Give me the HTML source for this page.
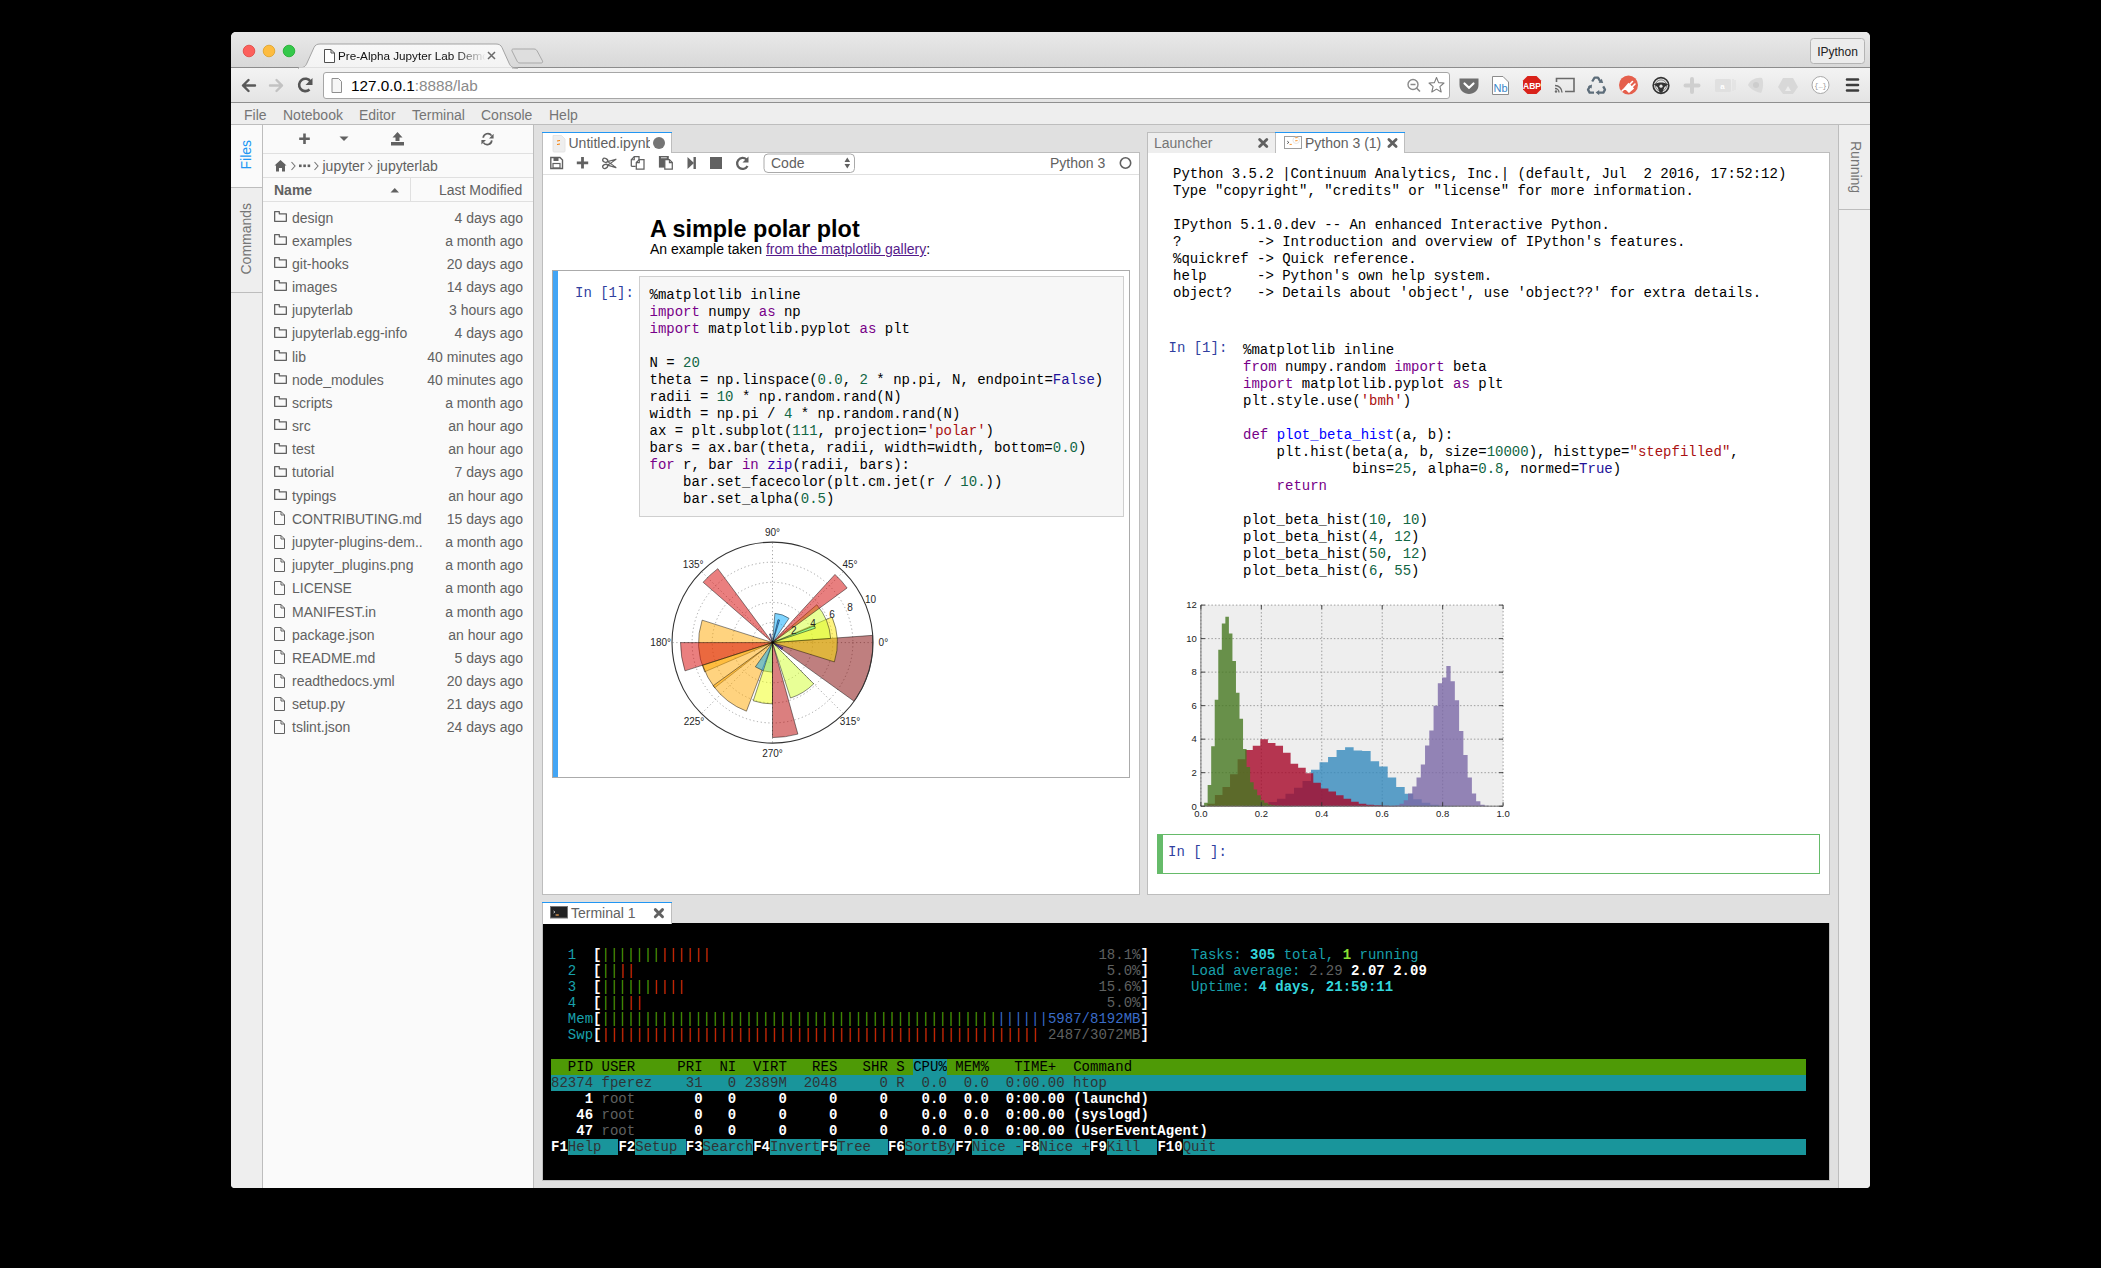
<!DOCTYPE html>
<html><head><meta charset="utf-8">
<style>
*{box-sizing:border-box}
html,body{margin:0;padding:0;background:#000;width:2101px;height:1268px;overflow:hidden}
body{font-family:"Liberation Sans",sans-serif;font-size:14px;color:#000}
.a{position:absolute}
.pre{white-space:pre}
.mono{font-family:"Liberation Mono",monospace}
#win{position:absolute;left:231px;top:32px;width:1639px;height:1156px;border-radius:5px 5px 4px 4px;overflow:hidden;background:#eeeeee}
#win > .a, #win .a{}
/* everything inside uses page coordinates via a shifted container */
#pg{position:absolute;left:-231px;top:-32px;width:2101px;height:1268px}
.ln{position:absolute;height:1px}
.vl{position:absolute;width:1px}
.ui{color:#757575}
.fb-row{position:absolute;left:274px;width:249px;height:23px;color:#616161;font-size:14px;line-height:23px}
.fb-row .d{position:absolute;right:0;top:0}
.fb-row .n{position:absolute;left:18px;top:0}
.fold{position:absolute;left:0;top:4.3px;width:13px;height:11px}
.code{font-family:"Liberation Mono",monospace;font-size:14px;line-height:17px;white-space:pre;color:#000}
.k{color:#770088}.nu{color:#116644}.s{color:#aa1111}.at{color:#221199}.bi{color:#3300aa}.df{color:#0000ff}
.prompt{font-family:"Liberation Mono",monospace;font-size:14px;color:#303f9f;white-space:pre}
.term{font-family:"Liberation Mono",monospace;font-size:14px;line-height:16px;white-space:pre;color:#d3d7cf}
</style></head><body>
<div id="win"><div id="pg">

<!-- ===== Chrome tab strip ===== -->
<div class="a" style="left:231px;top:32px;width:1639px;height:35px;background:linear-gradient(#e9e9e9,#d8d8d8)"></div>
<div class="ln" style="left:231px;top:67px;width:1639px;background:#8c8c8c"></div>
<!-- toolbar -->
<div class="a" style="left:231px;top:68px;width:1639px;height:34px;background:linear-gradient(#f3f3f3,#e4e4e4)"></div>
<div class="ln" style="left:231px;top:102px;width:1639px;background:#8f8f8f"></div>
<!-- menubar -->
<div class="a" style="left:231px;top:103px;width:1639px;height:21px;background:#eeeeee"></div>
<div class="ln" style="left:231px;top:124px;width:1639px;background:#bdbdbd"></div>

<svg class="a" style="left:0;top:0" width="2101" height="130" viewBox="0 0 2101 130">
  <defs>
    <linearGradient id="tabg" x1="0" y1="0" x2="0" y2="1"><stop offset="0" stop-color="#f8f8f8"/><stop offset="1" stop-color="#f3f3f3"/></linearGradient>
  </defs>
  <!-- traffic lights -->
  <circle cx="249" cy="51" r="5.8" fill="#fc605c" stroke="#e0443e" stroke-width="0.8"/>
  <circle cx="269" cy="51" r="5.8" fill="#fdbc40" stroke="#dea123" stroke-width="0.8"/>
  <circle cx="289" cy="51" r="5.8" fill="#34c84a" stroke="#1aab29" stroke-width="0.8"/>
  <!-- active tab -->
  <path d="M298 68 C304 68 305.5 66.5 307 63 L314 47.5 C315.2 45 317 44 320 44 L496 44 C499 44 500.8 45 502 47.5 L509 63 C510.5 66.5 512 68 518 68 Z" fill="url(#tabg)" stroke="#a3a3a3" stroke-width="1"/>
  <rect x="299" y="67.5" width="213" height="2" fill="#f3f3f3"/>
  <!-- new tab button -->
  <path d="M513.5 49 L534 49 C535.5 49 536.5 49.8 537.2 51 L542.5 61 C543 62.3 542.3 63 541 63 L520 63 C518.5 63 517.6 62.3 517 61 L512 51 C511.5 49.8 512 49 513.5 49 Z" fill="#dedede" stroke="#a9a9a9" stroke-width="1"/>
  <!-- tab page icon -->
  <path d="M324.5 49.5 L331 49.5 L334.5 53 L334.5 62.5 L324.5 62.5 Z M331 49.5 L331 53 L334.5 53" fill="#fff" stroke="#505050" stroke-width="1"/>
  <!-- close x -->
  <path d="M488 52 L495 59 M495 52 L488 59" stroke="#6a6a6a" stroke-width="1.5"/>
  <!-- IPython button -->
  <rect x="1810.5" y="38.5" width="54" height="25" rx="3" fill="#ececec" stroke="#b4b4b4"/>
  <!-- back / forward / reload -->
  <path d="M255 85.5 L243 85.5 M248.5 80 L243 85.5 L248.5 91" fill="none" stroke="#595959" stroke-width="2.4" stroke-linecap="round" stroke-linejoin="round"/>
  <path d="M270 85.5 L282 85.5 M276.5 80 L282 85.5 L276.5 91" fill="none" stroke="#c2c2c2" stroke-width="2.4" stroke-linecap="round" stroke-linejoin="round"/>
  <path d="M309.5 89.5 A6.2 6.2 0 1 1 310.5 81.5" fill="none" stroke="#555" stroke-width="2.6"/>
  <path d="M312.5 78 L312.5 85 L305.5 85 Z" fill="#555"/>
  <!-- address bar -->
  <rect x="323.5" y="72.5" width="1126" height="26" rx="2.5" fill="#fff" stroke="#a6a6a6"/>
  <path d="M332 78.5 L338.5 78.5 L341.5 81.5 L341.5 92.5 L332 92.5 Z" fill="#f6f6f6" stroke="#8e8e8e" stroke-width="1"/>
  <!-- zoom icon -->
  <circle cx="1413" cy="84.5" r="5" fill="none" stroke="#8a8a8a" stroke-width="1.4"/>
  <path d="M1410.5 84.5 L1415.5 84.5 M1416.5 88 L1420 91.5" stroke="#8a8a8a" stroke-width="1.6"/>
  <!-- star -->
  <path d="M1436.5 77.5 L1438.6 82.6 L1444 83 L1439.9 86.6 L1441.2 92 L1436.5 89.1 L1431.8 92 L1433.1 86.6 L1429 83 L1434.4 82.6 Z" fill="none" stroke="#7c7c7c" stroke-width="1.1" stroke-linejoin="round"/>
  <!-- pocket -->
  <path d="M1459.5 78.5 L1478.5 78.5 L1478.5 85 C1478.5 90.5 1474 94 1469 94 C1464 94 1459.5 90.5 1459.5 85 Z" fill="#6f6f6f"/>
  <path d="M1464.5 83.5 L1469 87.8 L1473.5 83.5" fill="none" stroke="#fff" stroke-width="2.2" stroke-linecap="round"/>
  <!-- Nb -->
  <path d="M1492.5 76.5 L1503 76.5 L1508.5 82 L1508.5 94.5 L1492.5 94.5 Z" fill="#fff" stroke="#8c8c8c"/>
  <text x="1493.5" y="91.5" font-family="Liberation Sans" font-size="11" fill="#3a86c8">Nb</text>
  <!-- ABP -->
  <path d="M1527.5 76 L1536.5 76 L1541 80.5 L1541 89.5 L1536.5 94 L1527.5 94 L1523 89.5 L1523 80.5 Z" fill="#d9221a"/>
  <text x="1532" y="89" text-anchor="middle" font-family="Liberation Sans" font-weight="bold" font-size="8.5" fill="#fff">ABP</text>
  <!-- cast -->
  <path d="M1556.5 82 L1556.5 78.5 L1574 78.5 L1574 91.5 L1565 91.5" fill="none" stroke="#6a6a6a" stroke-width="1.6"/>
  <path d="M1555 85.5 A7 7 0 0 1 1562 92.5 M1555 88.5 A4 4 0 0 1 1559 92.5" fill="none" stroke="#6a6a6a" stroke-width="1.4"/>
  <circle cx="1556" cy="91.5" r="1.2" fill="#6a6a6a"/>
  <!-- recycle -->
  <g fill="none" stroke="#5d6d7a" stroke-width="2.3" stroke-linejoin="round">
    <path d="M1592.2 81.5 L1594.6 77.6 L1598 77.6 L1600.3 81.3"/>
    <path d="M1603.2 86.4 L1605 89.6 L1603.4 92.6 L1598.8 92.6"/>
    <path d="M1594 92.6 L1589.6 92.6 L1588 89.6 L1590.2 86"/>
  </g>
  <path d="M1598.6 82.8 L1603.2 83 L1601.8 78.8 Z M1599.2 90 L1599.2 95.2 L1595.6 92.6 Z M1591.6 88.6 L1587.8 86.2 L1592 84.4 Z" fill="#5d6d7a"/>
  <!-- red plug -->
  <circle cx="1628.5" cy="85" r="9.5" fill="#e5604d"/>
  <path d="M1622 91 L1625 88 M1625 88 L1628.5 84 L1633 88.5 L1629 92 Z M1630 84 L1632.5 81.5 M1632.5 86.5 L1635 84" fill="#fff" stroke="#fff" stroke-width="1.6" stroke-linecap="round"/>
  <!-- steering wheel -->
  <circle cx="1661" cy="85.5" r="7.8" fill="#e4e4e4" stroke="#333" stroke-width="1.7"/>
  <circle cx="1661" cy="85.5" r="5.6" fill="none" stroke="#777" stroke-width="0.9"/>
  <path d="M1653.8 84.6 C1656 83 1659 82.6 1661 82.6 C1663 82.6 1666 83 1668.2 84.6 L1664.5 87 L1662.2 92.8 L1659.8 92.8 L1657.5 87 Z" fill="#333"/>
  <circle cx="1661" cy="86.2" r="1.6" fill="#e4e4e4"/>
  <!-- faded icons -->
  <path d="M1692 79 L1692 92 M1685.5 85.5 L1698.5 85.5" stroke="#cfcfcf" stroke-width="4" stroke-linecap="round"/>
  <rect x="1715" y="79" width="16" height="13" rx="1.5" fill="#e0e0e0"/>
  <path d="M1733 79 L1733 91 M1735 80 L1735 90" stroke="#e2e2e2" stroke-width="1.5"/>
  <text x="1722.5" y="89" text-anchor="middle" font-family="Liberation Sans" font-size="8" font-weight="bold" fill="#fff">a</text>
  <path d="M1748 85 C1750 80 1756 77 1762 78 C1764 82 1763 90 1761 93 C1756 92 1750 89 1748 85 Z" fill="#dadada"/>
  <circle cx="1756" cy="85" r="3" fill="#cdcdcd"/>
  <path d="M1783 78 L1793 78 L1798 87 L1793 94 L1783 94 L1778 87 Z" fill="#d8d8d8"/>
  <path d="M1788 86 L1791 91 L1785 91 Z" fill="#ececec"/>
  <circle cx="1820.5" cy="85" r="8.5" fill="#fff" stroke="#a8a8a8" stroke-width="1"/>
  <text x="1820.5" y="88" text-anchor="middle" font-family="Liberation Mono" font-size="7" fill="#999">{…}</text>
  <!-- hamburger -->
  <path d="M1847 79.5 L1858 79.5 M1847 85 L1858 85 M1847 90.5 L1858 90.5" stroke="#3c3c3c" stroke-width="2.6" stroke-linecap="round"/>
</svg>
<div class="a pre" style="left:338px;top:48px;height:16px;line-height:16px;font-size:11.7px;color:#111;width:148px;overflow:hidden;-webkit-mask-image:linear-gradient(90deg,#000 80%,transparent 100%)">Pre-Alpha Jupyter Lab Demo</div>
<div class="a pre" style="left:1810px;top:44px;width:55px;text-align:center;line-height:16px;font-size:12px;color:#222">IPython</div>
<div class="a pre" style="left:351px;top:77px;line-height:17px;font-size:15.3px;color:#000">127.0.0.1<span style="color:#8a8a8a">:8888/lab</span></div>
<!-- JupyterLab menu -->
<div class="a pre ui" style="left:244px;top:106px;line-height:18px;font-size:14px;color:#757575">File</div>
<div class="a pre ui" style="left:283px;top:106px;line-height:18px;font-size:14px;color:#757575">Notebook</div>
<div class="a pre ui" style="left:359px;top:106px;line-height:18px;font-size:14px;color:#757575">Editor</div>
<div class="a pre ui" style="left:412px;top:106px;line-height:18px;font-size:14px;color:#757575">Terminal</div>
<div class="a pre ui" style="left:481px;top:106px;line-height:18px;font-size:14px;color:#757575">Console</div>
<div class="a pre ui" style="left:549px;top:106px;line-height:18px;font-size:14px;color:#757575">Help</div>

<!-- ===== left sidebar ===== -->
<div class="a" style="left:231px;top:125px;width:31px;height:1063px;background:#eeeeee"></div>
<div class="a" style="left:231px;top:125px;width:31px;height:62px;background:#fafafa"></div>
<div class="ln" style="left:231px;top:187px;width:31px;background:#bdbdbd"></div>
<div class="ln" style="left:231px;top:292px;width:31px;background:#bdbdbd"></div>
<div class="vl" style="left:262px;top:125px;height:1063px;background:#bdbdbd"></div>
<div class="a pre" style="left:231.3px;top:145px;width:29px;height:20px;line-height:20px;text-align:center;color:#2196f3;transform:rotate(-90deg);transform-origin:50% 50%">Files</div>
<div class="a pre" style="left:210.3px;top:229px;width:71px;height:20px;line-height:20px;text-align:center;color:#757575;transform:rotate(-90deg);transform-origin:50% 50%">Commands</div>
<!-- ===== right sidebar ===== -->
<div class="a" style="left:1839px;top:125px;width:31px;height:1063px;background:#eeeeee"></div>
<div class="vl" style="left:1838px;top:125px;height:1063px;background:#bdbdbd"></div>
<div class="ln" style="left:1839px;top:209px;width:31px;background:#bdbdbd"></div>
<div class="a pre" style="left:1829.6px;top:156.5px;width:52px;height:20px;line-height:20px;text-align:center;color:#757575;transform:rotate(90deg);transform-origin:50% 50%">Running</div>
<!-- ===== file browser ===== -->
<div class="a" style="left:263px;top:125px;width:270px;height:1063px;background:#fafafa"></div>
<div class="vl" style="left:533px;top:125px;height:1063px;background:#bdbdbd"></div>
<div class="ln" style="left:263px;top:153px;width:270px;background:#e0e0e0"></div>
<div class="ln" style="left:263px;top:177px;width:270px;background:#e0e0e0"></div>
<div class="ln" style="left:263px;top:201px;width:270px;background:#e0e0e0"></div>
<div class="vl" style="left:410px;top:178px;height:23px;background:#e0e0e0"></div>
<svg class="a" style="left:263px;top:125px" width="270" height="80" viewBox="263 125 270 80">
  <path d="M304.5 133.5 L304.5 144 M299.2 138.8 L309.8 138.8" stroke="#616161" stroke-width="2.6"/>
  <path d="M339.5 136.5 L348.5 136.5 L344 141 Z" fill="#616161"/>
  <path d="M397.5 132 L392.5 137.5 L395.5 137.5 L395.5 141 L399.5 141 L399.5 137.5 L402.5 137.5 Z" fill="#616161"/>
  <rect x="391" y="142" width="13" height="3.5" fill="#616161"/>
  <path d="M491.6 135.6 A4.6 4.6 0 0 0 483.2 137.8 M483.4 142.6 A4.6 4.6 0 0 0 491.8 140.4" fill="none" stroke="#616161" stroke-width="1.7"/>
  <path d="M493.6 133.8 L493.6 138.4 L489 138.4 Z M481.4 144.6 L481.4 140 L486 140 Z" fill="#616161"/>
  <!-- breadcrumbs -->
  <path d="M280.5 160 L274.5 165.5 L276 165.5 L276 171.5 L279 171.5 L279 168 L282 168 L282 171.5 L285 171.5 L285 165.5 L286.5 165.5 Z" fill="#616161"/>
  <path d="M291.5 162 L295 166 L291.5 170" fill="none" stroke="#757575" stroke-width="1.1"/>
  <rect x="299" y="164.5" width="2.6" height="2.6" fill="#616161"/><rect x="303.3" y="164.5" width="2.6" height="2.6" fill="#616161"/><rect x="307.6" y="164.5" width="2.6" height="2.6" fill="#616161"/>
  <path d="M314.5 162 L318 166 L314.5 170" fill="none" stroke="#757575" stroke-width="1.1"/>
  <path d="M368.5 162 L372 166 L368.5 170" fill="none" stroke="#757575" stroke-width="1.1"/>
  <path d="M390.5 192.5 L399 192.5 L394.75 188 Z" fill="#616161"/>
</svg>
<div class="a pre" style="left:322.5px;top:156px;line-height:20px;color:#616161">jupyter</div>
<div class="a pre" style="left:377px;top:156px;line-height:20px;color:#616161">jupyterlab</div>
<div class="a pre" style="left:274px;top:180px;line-height:20px;color:#616161;font-weight:bold">Name</div>
<div class="a pre" style="left:439px;top:180px;width:83px;text-align:right;line-height:20px;color:#616161">Last Modified</div>
<div class="fb-row" style="top:206.50px"><svg class="fold" viewBox="0 0 13 11"><path d="M0.65 0.65 L5.3 0.65 L5.3 2.8 L12.35 2.8 L12.35 10.35 L0.65 10.35 Z" fill="none" stroke="#616161" stroke-width="1.3" stroke-linejoin="round"/></svg><span class="n pre">design</span><span class="d pre">4 days ago</span></div>
<div class="fb-row" style="top:229.68px"><svg class="fold" viewBox="0 0 13 11"><path d="M0.65 0.65 L5.3 0.65 L5.3 2.8 L12.35 2.8 L12.35 10.35 L0.65 10.35 Z" fill="none" stroke="#616161" stroke-width="1.3" stroke-linejoin="round"/></svg><span class="n pre">examples</span><span class="d pre">a month ago</span></div>
<div class="fb-row" style="top:252.86px"><svg class="fold" viewBox="0 0 13 11"><path d="M0.65 0.65 L5.3 0.65 L5.3 2.8 L12.35 2.8 L12.35 10.35 L0.65 10.35 Z" fill="none" stroke="#616161" stroke-width="1.3" stroke-linejoin="round"/></svg><span class="n pre">git-hooks</span><span class="d pre">20 days ago</span></div>
<div class="fb-row" style="top:276.04px"><svg class="fold" viewBox="0 0 13 11"><path d="M0.65 0.65 L5.3 0.65 L5.3 2.8 L12.35 2.8 L12.35 10.35 L0.65 10.35 Z" fill="none" stroke="#616161" stroke-width="1.3" stroke-linejoin="round"/></svg><span class="n pre">images</span><span class="d pre">14 days ago</span></div>
<div class="fb-row" style="top:299.22px"><svg class="fold" viewBox="0 0 13 11"><path d="M0.65 0.65 L5.3 0.65 L5.3 2.8 L12.35 2.8 L12.35 10.35 L0.65 10.35 Z" fill="none" stroke="#616161" stroke-width="1.3" stroke-linejoin="round"/></svg><span class="n pre">jupyterlab</span><span class="d pre">3 hours ago</span></div>
<div class="fb-row" style="top:322.40px"><svg class="fold" viewBox="0 0 13 11"><path d="M0.65 0.65 L5.3 0.65 L5.3 2.8 L12.35 2.8 L12.35 10.35 L0.65 10.35 Z" fill="none" stroke="#616161" stroke-width="1.3" stroke-linejoin="round"/></svg><span class="n pre">jupyterlab.egg-info</span><span class="d pre">4 days ago</span></div>
<div class="fb-row" style="top:345.58px"><svg class="fold" viewBox="0 0 13 11"><path d="M0.65 0.65 L5.3 0.65 L5.3 2.8 L12.35 2.8 L12.35 10.35 L0.65 10.35 Z" fill="none" stroke="#616161" stroke-width="1.3" stroke-linejoin="round"/></svg><span class="n pre">lib</span><span class="d pre">40 minutes ago</span></div>
<div class="fb-row" style="top:368.76px"><svg class="fold" viewBox="0 0 13 11"><path d="M0.65 0.65 L5.3 0.65 L5.3 2.8 L12.35 2.8 L12.35 10.35 L0.65 10.35 Z" fill="none" stroke="#616161" stroke-width="1.3" stroke-linejoin="round"/></svg><span class="n pre">node_modules</span><span class="d pre">40 minutes ago</span></div>
<div class="fb-row" style="top:391.94px"><svg class="fold" viewBox="0 0 13 11"><path d="M0.65 0.65 L5.3 0.65 L5.3 2.8 L12.35 2.8 L12.35 10.35 L0.65 10.35 Z" fill="none" stroke="#616161" stroke-width="1.3" stroke-linejoin="round"/></svg><span class="n pre">scripts</span><span class="d pre">a month ago</span></div>
<div class="fb-row" style="top:415.12px"><svg class="fold" viewBox="0 0 13 11"><path d="M0.65 0.65 L5.3 0.65 L5.3 2.8 L12.35 2.8 L12.35 10.35 L0.65 10.35 Z" fill="none" stroke="#616161" stroke-width="1.3" stroke-linejoin="round"/></svg><span class="n pre">src</span><span class="d pre">an hour ago</span></div>
<div class="fb-row" style="top:438.30px"><svg class="fold" viewBox="0 0 13 11"><path d="M0.65 0.65 L5.3 0.65 L5.3 2.8 L12.35 2.8 L12.35 10.35 L0.65 10.35 Z" fill="none" stroke="#616161" stroke-width="1.3" stroke-linejoin="round"/></svg><span class="n pre">test</span><span class="d pre">an hour ago</span></div>
<div class="fb-row" style="top:461.48px"><svg class="fold" viewBox="0 0 13 11"><path d="M0.65 0.65 L5.3 0.65 L5.3 2.8 L12.35 2.8 L12.35 10.35 L0.65 10.35 Z" fill="none" stroke="#616161" stroke-width="1.3" stroke-linejoin="round"/></svg><span class="n pre">tutorial</span><span class="d pre">7 days ago</span></div>
<div class="fb-row" style="top:484.66px"><svg class="fold" viewBox="0 0 13 11"><path d="M0.65 0.65 L5.3 0.65 L5.3 2.8 L12.35 2.8 L12.35 10.35 L0.65 10.35 Z" fill="none" stroke="#616161" stroke-width="1.3" stroke-linejoin="round"/></svg><span class="n pre">typings</span><span class="d pre">an hour ago</span></div>
<div class="fb-row" style="top:507.84px"><svg class="fold" style="top:3.5px;width:11px;height:14px;left:0.3px" viewBox="0 0 11 14"><path d="M0.5 0.5 L7 0.5 L10.5 4 L10.5 13.5 L0.5 13.5 Z M7 0.5 L7 4 L10.5 4" fill="none" stroke="#616161" stroke-width="1"/></svg><span class="n pre">CONTRIBUTING.md</span><span class="d pre">15 days ago</span></div>
<div class="fb-row" style="top:531.02px"><svg class="fold" style="top:3.5px;width:11px;height:14px;left:0.3px" viewBox="0 0 11 14"><path d="M0.5 0.5 L7 0.5 L10.5 4 L10.5 13.5 L0.5 13.5 Z M7 0.5 L7 4 L10.5 4" fill="none" stroke="#616161" stroke-width="1"/></svg><span class="n pre">jupyter-plugins-dem..</span><span class="d pre">a month ago</span></div>
<div class="fb-row" style="top:554.20px"><svg class="fold" style="top:3.5px;width:11px;height:14px;left:0.3px" viewBox="0 0 11 14"><path d="M0.5 0.5 L7 0.5 L10.5 4 L10.5 13.5 L0.5 13.5 Z M7 0.5 L7 4 L10.5 4" fill="none" stroke="#616161" stroke-width="1"/></svg><span class="n pre">jupyter_plugins.png</span><span class="d pre">a month ago</span></div>
<div class="fb-row" style="top:577.38px"><svg class="fold" style="top:3.5px;width:11px;height:14px;left:0.3px" viewBox="0 0 11 14"><path d="M0.5 0.5 L7 0.5 L10.5 4 L10.5 13.5 L0.5 13.5 Z M7 0.5 L7 4 L10.5 4" fill="none" stroke="#616161" stroke-width="1"/></svg><span class="n pre">LICENSE</span><span class="d pre">a month ago</span></div>
<div class="fb-row" style="top:600.56px"><svg class="fold" style="top:3.5px;width:11px;height:14px;left:0.3px" viewBox="0 0 11 14"><path d="M0.5 0.5 L7 0.5 L10.5 4 L10.5 13.5 L0.5 13.5 Z M7 0.5 L7 4 L10.5 4" fill="none" stroke="#616161" stroke-width="1"/></svg><span class="n pre">MANIFEST.in</span><span class="d pre">a month ago</span></div>
<div class="fb-row" style="top:623.74px"><svg class="fold" style="top:3.5px;width:11px;height:14px;left:0.3px" viewBox="0 0 11 14"><path d="M0.5 0.5 L7 0.5 L10.5 4 L10.5 13.5 L0.5 13.5 Z M7 0.5 L7 4 L10.5 4" fill="none" stroke="#616161" stroke-width="1"/></svg><span class="n pre">package.json</span><span class="d pre">an hour ago</span></div>
<div class="fb-row" style="top:646.92px"><svg class="fold" style="top:3.5px;width:11px;height:14px;left:0.3px" viewBox="0 0 11 14"><path d="M0.5 0.5 L7 0.5 L10.5 4 L10.5 13.5 L0.5 13.5 Z M7 0.5 L7 4 L10.5 4" fill="none" stroke="#616161" stroke-width="1"/></svg><span class="n pre">README.md</span><span class="d pre">5 days ago</span></div>
<div class="fb-row" style="top:670.10px"><svg class="fold" style="top:3.5px;width:11px;height:14px;left:0.3px" viewBox="0 0 11 14"><path d="M0.5 0.5 L7 0.5 L10.5 4 L10.5 13.5 L0.5 13.5 Z M7 0.5 L7 4 L10.5 4" fill="none" stroke="#616161" stroke-width="1"/></svg><span class="n pre">readthedocs.yml</span><span class="d pre">20 days ago</span></div>
<div class="fb-row" style="top:693.28px"><svg class="fold" style="top:3.5px;width:11px;height:14px;left:0.3px" viewBox="0 0 11 14"><path d="M0.5 0.5 L7 0.5 L10.5 4 L10.5 13.5 L0.5 13.5 Z M7 0.5 L7 4 L10.5 4" fill="none" stroke="#616161" stroke-width="1"/></svg><span class="n pre">setup.py</span><span class="d pre">21 days ago</span></div>
<div class="fb-row" style="top:716.46px"><svg class="fold" style="top:3.5px;width:11px;height:14px;left:0.3px" viewBox="0 0 11 14"><path d="M0.5 0.5 L7 0.5 L10.5 4 L10.5 13.5 L0.5 13.5 Z M7 0.5 L7 4 L10.5 4" fill="none" stroke="#616161" stroke-width="1"/></svg><span class="n pre">tslint.json</span><span class="d pre">24 days ago</span></div>

<!-- ===== dock area ===== -->
<div class="a" style="left:534px;top:125px;width:1304px;height:1063px;background:#e0e0e0"></div>
<!-- notebook panel -->
<div class="a" style="left:542px;top:152px;width:598px;height:743px;background:#fff;border:1px solid #bdbdbd"></div>
<div class="ln" style="left:543px;top:174px;width:596px;background:#e0e0e0"></div>
<!-- notebook tab -->
<div class="a" style="left:542px;top:132px;width:130px;height:21px;background:#fff;border-left:1px solid #bdbdbd;border-right:1px solid #bdbdbd"></div>
<div class="ln" style="left:542px;top:132px;width:130px;height:1px;background:#2196f3"></div>
<svg class="a" style="left:540px;top:130px" width="600" height="50" viewBox="540 130 600 50">
  <path d="M553 135.5 L561.5 135.5 L565 139 L565 151 Q565 152 564 152 L554 152 Q553 152 553 151 Z" fill="#eeeeee" stroke="#e0e0e0" stroke-width="0.8"/>
  <path d="M557 141 L560 140.5 M557 144.5 L560 144" stroke="#f57c00" stroke-width="1"/>
  <circle cx="659" cy="143" r="6" fill="#757575"/>
  <!-- toolbar icons -->
  <path d="M550.8 157.5 L560 157.5 L562.5 160 L562.5 168.5 L550.8 168.5 Z" fill="none" stroke="#616161" stroke-width="1.4"/>
  <rect x="553.5" y="157.5" width="5" height="3.5" fill="#616161"/>
  <rect x="553" y="163.5" width="7" height="4.5" fill="none" stroke="#616161" stroke-width="1.2"/>
  <path d="M582.5 157 L582.5 168.5 M576.8 162.8 L588.2 162.8" stroke="#616161" stroke-width="2.8"/>
  <ellipse cx="605.2" cy="160.3" rx="2.6" ry="1.9" transform="rotate(25 605.2 160.3)" fill="none" stroke="#616161" stroke-width="1.3"/>
  <ellipse cx="605.2" cy="166.4" rx="2.6" ry="1.9" transform="rotate(-25 605.2 166.4)" fill="none" stroke="#616161" stroke-width="1.3"/>
  <path d="M607.5 161.6 L610.5 163.4 L616 159.2 Z M607.5 165.1 L610.5 163.4 L616 167.6 Z" fill="none" stroke="#616161" stroke-width="1.1" stroke-linejoin="round"/>
  <path d="M631.3 166.3 L631.3 159.8 L634.3 156.6 L639 156.6 L639 160" fill="#fff" stroke="#616161" stroke-width="1.25"/>
  <path d="M631.3 159.8 L634.3 159.8 L634.3 156.6" fill="none" stroke="#616161" stroke-width="1.1"/>
  <path d="M631.3 166.3 L635.7 166.3" stroke="#616161" stroke-width="1.25"/>
  <path d="M636.3 169 L636.3 162.6 L639.3 159.6 L644 159.6 L644 169 Z" fill="#fff" stroke="#616161" stroke-width="1.25"/>
  <path d="M636.3 162.6 L639.3 162.6 L639.3 159.6" fill="none" stroke="#616161" stroke-width="1.1"/>
  <rect x="658.9" y="156" width="9.9" height="11.6" fill="#616161"/>
  <rect x="661" y="157.2" width="5.8" height="1.1" fill="#cfcfcf"/>
  <path d="M664.8 159.6 L669.4 159.6 L672.3 162.6 L672.3 169 L664.8 169 Z" fill="#fff" stroke="#616161" stroke-width="1.25"/>
  <path d="M669.4 159.6 L669.4 162.6 L672.3 162.6" fill="none" stroke="#616161" stroke-width="1.1"/>
  <path d="M687.5 157 L694 163 L687.5 169 Z" fill="#616161"/>
  <rect x="693.5" y="157" width="2.4" height="12" fill="#616161"/>
  <rect x="710" y="157" width="12" height="12" fill="#616161"/>
  <path d="M746.5 159.5 A5.5 5.5 0 1 0 747.5 166" fill="none" stroke="#616161" stroke-width="2.3"/>
  <path d="M748.5 156.5 L748.5 162.5 L742.5 162.5 Z" fill="#616161"/>
  <rect x="764" y="154" width="90.5" height="18.5" rx="4" fill="#fff" stroke="#a0a0a0" stroke-width="0.9"/>
  <path d="M844.5 162 L847.3 157.5 L850.1 162 Z M844.5 164 L847.3 168.5 L850.1 164 Z" fill="#616161"/>
  <circle cx="1125.5" cy="163" r="5.2" fill="none" stroke="#616161" stroke-width="1.6"/>
</svg>
<div class="a pre" style="left:568.5px;top:133px;width:81px;overflow:hidden;line-height:20px;color:#616161">Untitled.ipynb</div>
<div class="a pre" style="left:771px;top:153px;line-height:20px;color:#616161">Code</div>
<div class="a pre" style="left:1050px;top:153px;line-height:20px;color:#616161">Python 3</div>
<!-- markdown cell -->
<div class="a pre" style="left:650px;top:216px;line-height:26px;font-size:23.4px;font-weight:bold;color:#000">A simple polar plot</div>
<div class="a pre" style="left:650px;top:240px;line-height:18px;font-size:14px;color:#000">An example taken <span style="color:#551a8b;text-decoration:underline">from the matplotlib gallery</span>:</div>
<!-- code cell -->
<div class="a" style="left:552px;top:270px;width:578px;height:508px;border:1px solid #ababab;background:#fff"></div>
<div class="a" style="left:553px;top:271px;width:5px;height:506px;background:#42a5f5"></div>
<div class="a prompt" style="left:575px;top:285px;line-height:17px">In [1]:</div>
<div class="a" style="left:639px;top:276px;width:485px;height:241px;border:1px solid #cfcfcf;background:#f7f7f7"></div>
<div class="a code" style="left:649.5px;top:287px">%matplotlib inline
<span class="k">import</span> numpy <span class="k">as</span> np
<span class="k">import</span> matplotlib.pyplot <span class="k">as</span> plt

N = <span class="nu">20</span>
theta = np.linspace(<span class="nu">0.0</span>, <span class="nu">2</span> * np.pi, N, endpoint=<span class="at">False</span>)
radii = <span class="nu">10</span> * np.random.rand(N)
width = np.pi / <span class="nu">4</span> * np.random.rand(N)
ax = plt.subplot(<span class="nu">111</span>, projection=<span class="s">'polar'</span>)
bars = ax.bar(theta, radii, width=width, bottom=<span class="nu">0.0</span>)
<span class="k">for</span> r, bar <span class="k">in</span> <span class="bi">zip</span>(radii, bars):
    bar.set_facecolor(plt.cm.jet(r / <span class="nu">10.</span>))
    bar.set_alpha(<span class="nu">0.5</span>)</div>
<!-- POLAR -->
<svg class="a" style="left:640px;top:520px" width="260" height="250" viewBox="640 520 260 250">
<circle cx="772.5" cy="642.6" r="20.10" fill="none" stroke="#9a9a9a" stroke-width="0.9" stroke-dasharray="1.2 2.6"/>
<circle cx="772.5" cy="642.6" r="40.20" fill="none" stroke="#9a9a9a" stroke-width="0.9" stroke-dasharray="1.2 2.6"/>
<circle cx="772.5" cy="642.6" r="60.30" fill="none" stroke="#9a9a9a" stroke-width="0.9" stroke-dasharray="1.2 2.6"/>
<circle cx="772.5" cy="642.6" r="80.40" fill="none" stroke="#9a9a9a" stroke-width="0.9" stroke-dasharray="1.2 2.6"/>
<line x1="772.5" y1="642.6" x2="873.00" y2="642.60" stroke="#9a9a9a" stroke-width="0.9" stroke-dasharray="1.2 2.6"/>
<line x1="772.5" y1="642.6" x2="843.56" y2="571.54" stroke="#9a9a9a" stroke-width="0.9" stroke-dasharray="1.2 2.6"/>
<line x1="772.5" y1="642.6" x2="772.50" y2="542.10" stroke="#9a9a9a" stroke-width="0.9" stroke-dasharray="1.2 2.6"/>
<line x1="772.5" y1="642.6" x2="701.44" y2="571.54" stroke="#9a9a9a" stroke-width="0.9" stroke-dasharray="1.2 2.6"/>
<line x1="772.5" y1="642.6" x2="672.00" y2="642.60" stroke="#9a9a9a" stroke-width="0.9" stroke-dasharray="1.2 2.6"/>
<line x1="772.5" y1="642.6" x2="701.44" y2="713.66" stroke="#9a9a9a" stroke-width="0.9" stroke-dasharray="1.2 2.6"/>
<line x1="772.5" y1="642.6" x2="772.50" y2="743.10" stroke="#9a9a9a" stroke-width="0.9" stroke-dasharray="1.2 2.6"/>
<line x1="772.5" y1="642.6" x2="843.56" y2="713.66" stroke="#9a9a9a" stroke-width="0.9" stroke-dasharray="1.2 2.6"/>
<path d="M772.5 642.6 L854.11 701.25 A100.50 100.50 0 0 0 872.74 635.33 Z" fill="#7f0000" fill-opacity="0.5" stroke="#000" stroke-opacity="0.5" stroke-width="0.9"/>
<path d="M772.5 642.6 L834.39 661.88 A64.82 64.82 0 0 0 832.04 616.96 Z" fill="#ffea00" fill-opacity="0.5" stroke="#000" stroke-opacity="0.5" stroke-width="0.9"/>
<path d="M772.5 642.6 L830.64 638.38 A58.29 58.29 0 0 0 816.82 604.74 Z" fill="#d1ff2d" fill-opacity="0.5" stroke="#000" stroke-opacity="0.5" stroke-width="0.9"/>
<path d="M772.5 642.6 L815.36 628.18 A45.23 45.23 0 0 0 814.43 625.66 Z" fill="#4cffb2" fill-opacity="0.5" stroke="#000" stroke-opacity="0.5" stroke-width="0.9"/>
<path d="M772.5 642.6 L847.11 587.99 A92.46 92.46 0 0 0 834.97 574.43 Z" fill="#d10000" fill-opacity="0.5" stroke="#000" stroke-opacity="0.5" stroke-width="0.9"/>
<path d="M772.5 642.6 L789.04 618.36 A29.35 29.35 0 0 0 774.90 613.35 Z" fill="#00aaff" fill-opacity="0.5" stroke="#000" stroke-opacity="0.5" stroke-width="0.9"/>
<path d="M772.5 642.6 L779.60 620.08 A23.62 23.62 0 0 0 778.01 619.64 Z" fill="#0070ff" fill-opacity="0.5" stroke="#000" stroke-opacity="0.5" stroke-width="0.9"/>
<path d="M772.5 642.6 L770.62 633.75 A9.05 9.05 0 0 0 769.41 634.10 Z" fill="#0000db" fill-opacity="0.5" stroke="#000" stroke-opacity="0.5" stroke-width="0.9"/>
<path d="M772.5 642.6 L717.80 568.68 A91.96 91.96 0 0 0 703.10 582.27 Z" fill="#d60000" fill-opacity="0.5" stroke="#000" stroke-opacity="0.5" stroke-width="0.9"/>
<path d="M772.5 642.6 L702.13 620.14 A73.87 73.87 0 0 0 704.66 671.82 Z" fill="#ffa800" fill-opacity="0.5" stroke="#000" stroke-opacity="0.5" stroke-width="0.9"/>
<path d="M772.5 642.6 L680.54 642.60 A91.96 91.96 0 0 0 684.99 670.86 Z" fill="#d60000" fill-opacity="0.5" stroke="#000" stroke-opacity="0.5" stroke-width="0.9"/>
<path d="M772.5 642.6 L702.73 665.27 A73.37 73.37 0 0 0 714.69 687.77 Z" fill="#ffa800" fill-opacity="0.5" stroke="#000" stroke-opacity="0.5" stroke-width="0.9"/>
<path d="M772.5 642.6 L713.15 685.72 A73.37 73.37 0 0 0 746.45 711.18 Z" fill="#ffa800" fill-opacity="0.5" stroke="#000" stroke-opacity="0.5" stroke-width="0.9"/>
<path d="M772.5 642.6 L755.37 666.80 A29.65 29.65 0 0 0 772.50 672.25 Z" fill="#00adff" fill-opacity="0.5" stroke="#000" stroke-opacity="0.5" stroke-width="0.9"/>
<path d="M772.5 642.6 L753.25 700.80 A61.30 61.30 0 0 0 772.50 703.90 Z" fill="#efff0f" fill-opacity="0.5" stroke="#000" stroke-opacity="0.5" stroke-width="0.9"/>
<path d="M772.5 642.6 L772.50 737.57 A94.97 94.97 0 0 0 797.88 734.12 Z" fill="#b70000" fill-opacity="0.5" stroke="#000" stroke-opacity="0.5" stroke-width="0.9"/>
<path d="M772.5 642.6 L790.51 698.04 A58.29 58.29 0 0 0 813.72 683.82 Z" fill="#d1ff2d" fill-opacity="0.5" stroke="#000" stroke-opacity="0.5" stroke-width="0.9"/>
<path d="M772.5 642.6 L781.73 649.56 A11.56 11.56 0 0 0 782.89 647.67 Z" fill="#0000f4" fill-opacity="0.5" stroke="#000" stroke-opacity="0.5" stroke-width="0.9"/>
<circle cx="772.5" cy="642.6" r="100.5" fill="none" stroke="#333" stroke-width="1.1"/>
<text x="772.5" y="535.8000000000001" text-anchor="middle" font-family="Liberation Sans" font-size="10" fill="#262626">90°</text>
<text x="850" y="568.0" text-anchor="middle" font-family="Liberation Sans" font-size="10" fill="#262626">45°</text>
<text x="883.4" y="646.2" text-anchor="middle" font-family="Liberation Sans" font-size="10" fill="#262626">0°</text>
<text x="850" y="724.6" text-anchor="middle" font-family="Liberation Sans" font-size="10" fill="#262626">315°</text>
<text x="772.5" y="757.2" text-anchor="middle" font-family="Liberation Sans" font-size="10" fill="#262626">270°</text>
<text x="694" y="724.6" text-anchor="middle" font-family="Liberation Sans" font-size="10" fill="#262626">225°</text>
<text x="660.7" y="646.2" text-anchor="middle" font-family="Liberation Sans" font-size="10" fill="#262626">180°</text>
<text x="693.2" y="568.0" text-anchor="middle" font-family="Liberation Sans" font-size="10" fill="#262626">135°</text>
<text x="870.6" y="603.4" text-anchor="middle" font-family="Liberation Sans" font-size="10" fill="#262626">10</text>
<text x="850" y="611.3000000000001" text-anchor="middle" font-family="Liberation Sans" font-size="10" fill="#262626">8</text>
<text x="832" y="618.2" text-anchor="middle" font-family="Liberation Sans" font-size="10" fill="#262626">6</text>
<text x="813" y="626.5" text-anchor="middle" font-family="Liberation Sans" font-size="10" fill="#262626">4</text>
<text x="793.8" y="633.6" text-anchor="middle" font-family="Liberation Sans" font-size="10" fill="#262626">2</text>
</svg>
<!-- /POLAR -->

<!-- console panel -->
<div class="a" style="left:1147px;top:152px;width:683px;height:743px;background:#fff;border:1px solid #bdbdbd"></div>
<!-- console tabs -->
<div class="a" style="left:1147px;top:132px;width:129px;height:21px;background:#eeeeee;border:1px solid #bdbdbd;border-bottom:none"></div>
<div class="a" style="left:1275px;top:132px;width:130px;height:21px;background:#fff;border-left:1px solid #bdbdbd;border-right:1px solid #bdbdbd"></div>
<div class="ln" style="left:1275px;top:132px;width:130px;height:1px;background:#2196f3"></div>
<div class="a pre" style="left:1154px;top:133px;line-height:20px;color:#757575">Launcher</div>
<div class="a pre" style="left:1305px;top:133px;line-height:20px;color:#616161">Python 3 (1)</div>
<svg class="a" style="left:1147px;top:130px" width="300" height="25" viewBox="1147 130 300 25">
  <path d="M1259.6 139.4 L1266.8 146.6 M1266.8 139.4 L1259.6 146.6" stroke="#616161" stroke-width="2.8" stroke-linecap="round"/>
  <path d="M1388.9 139.4 L1396.1 146.6 M1396.1 139.4 L1388.9 146.6" stroke="#616161" stroke-width="2.8" stroke-linecap="round"/>
  <rect x="1284.5" y="136.5" width="17" height="12" fill="#fff" stroke="#9e9e9e" stroke-width="1"/>
  <path d="M1287.3 141.2 L1288.8 142.4 L1287.3 143.6" stroke="#222" stroke-width="0.8" fill="none"/>
  <path d="M1289.6 144.4 L1291.8 144.4" stroke="#f57c00" stroke-width="0.8"/>
  <circle cx="1296.2" cy="140.2" r="3.3" fill="#fff" stroke="#e0e0e0" stroke-width="0.8"/>
  <path d="M1295.2 137.8 L1297.6 137.6 M1295.2 140.8 L1297.6 140.6" stroke="#f57c00" stroke-width="0.8"/>
</svg>
<div class="a code" style="left:1173px;top:166px">Python 3.5.2 |Continuum Analytics, Inc.| (default, Jul  2 2016, 17:52:12)
Type "copyright", "credits" or "license" for more information.

IPython 5.1.0.dev -- An enhanced Interactive Python.
?         -> Introduction and overview of IPython's features.
%quickref -> Quick reference.
help      -> Python's own help system.
object?   -> Details about 'object', use 'object??' for extra details.</div>
<div class="a prompt" style="left:1168.5px;top:340px;line-height:17px">In [1]:</div>
<div class="a code" style="left:1243px;top:342px">%matplotlib inline
<span class="k">from</span> numpy.random <span class="k">import</span> beta
<span class="k">import</span> matplotlib.pyplot <span class="k">as</span> plt
plt.style.use(<span class="s">'bmh'</span>)

<span class="k">def</span> <span class="df">plot_beta_hist</span>(a, b):
    plt.hist(beta(a, b, size=<span class="nu">10000</span>), histtype=<span class="s">"stepfilled"</span>,
             bins=<span class="nu">25</span>, alpha=<span class="nu">0.8</span>, normed=<span class="at">True</span>)
    <span class="k">return</span>

plot_beta_hist(<span class="nu">10</span>, <span class="nu">10</span>)
plot_beta_hist(<span class="nu">4</span>, <span class="nu">12</span>)
plot_beta_hist(<span class="nu">50</span>, <span class="nu">12</span>)
plot_beta_hist(<span class="nu">6</span>, <span class="nu">55</span>)</div>
<!-- HIST -->
<svg class="a" style="left:1170px;top:590px" width="350" height="240" viewBox="1170 590 350 240">
<rect x="1200.9" y="605.1" width="302.20" height="201.10" fill="#eeeeee"/>
<line x1="1200.9" y1="772.68" x2="1503.1" y2="772.68" stroke="#7a7a7a" stroke-width="0.7" stroke-dasharray="1.5 2"/>
<line x1="1200.9" y1="739.17" x2="1503.1" y2="739.17" stroke="#7a7a7a" stroke-width="0.7" stroke-dasharray="1.5 2"/>
<line x1="1200.9" y1="705.65" x2="1503.1" y2="705.65" stroke="#7a7a7a" stroke-width="0.7" stroke-dasharray="1.5 2"/>
<line x1="1200.9" y1="672.13" x2="1503.1" y2="672.13" stroke="#7a7a7a" stroke-width="0.7" stroke-dasharray="1.5 2"/>
<line x1="1200.9" y1="638.62" x2="1503.1" y2="638.62" stroke="#7a7a7a" stroke-width="0.7" stroke-dasharray="1.5 2"/>
<line x1="1261.34" y1="605.1" x2="1261.34" y2="806.2" stroke="#7a7a7a" stroke-width="0.7" stroke-dasharray="1.5 2"/>
<line x1="1321.78" y1="605.1" x2="1321.78" y2="806.2" stroke="#7a7a7a" stroke-width="0.7" stroke-dasharray="1.5 2"/>
<line x1="1382.22" y1="605.1" x2="1382.22" y2="806.2" stroke="#7a7a7a" stroke-width="0.7" stroke-dasharray="1.5 2"/>
<line x1="1442.66" y1="605.1" x2="1442.66" y2="806.2" stroke="#7a7a7a" stroke-width="0.7" stroke-dasharray="1.5 2"/>
<path d="M1242.91 806.20 L1242.91 805.86 L1251.42 805.86 L1251.42 805.36 L1259.94 805.36 L1259.94 804.19 L1268.46 804.19 L1268.46 802.01 L1276.97 802.01 L1276.97 798.66 L1285.49 798.66 L1285.49 793.63 L1294.00 793.63 L1294.00 787.77 L1302.52 787.77 L1302.52 781.06 L1311.03 781.06 L1311.03 769.83 L1319.55 769.83 L1319.55 762.29 L1328.06 762.29 L1328.06 756.93 L1336.58 756.93 L1336.58 749.89 L1345.09 749.89 L1345.09 747.21 L1353.61 747.21 L1353.61 750.56 L1362.12 750.56 L1362.12 750.90 L1370.64 750.90 L1370.64 761.29 L1379.15 761.29 L1379.15 766.48 L1387.67 766.48 L1387.67 777.38 L1396.19 777.38 L1396.19 786.93 L1404.70 786.93 L1404.70 793.63 L1413.22 793.63 L1413.22 799.16 L1421.73 799.16 L1421.73 802.85 L1430.25 802.85 L1430.25 804.86 L1438.76 804.86 L1438.76 805.70 L1447.28 805.70 L1447.28 806.03 L1455.79 806.03 L1455.79 806.20 Z" fill="#348ABD" fill-opacity="0.8"/>
<path d="M1207.33 806.20 L1207.33 803.69 L1214.90 803.69 L1214.90 794.97 L1222.47 794.97 L1222.47 786.93 L1230.04 786.93 L1230.04 774.36 L1237.61 774.36 L1237.61 759.28 L1245.18 759.28 L1245.18 750.06 L1252.75 750.06 L1252.75 745.87 L1260.32 745.87 L1260.32 739.17 L1267.89 739.17 L1267.89 743.02 L1275.46 743.02 L1275.46 745.87 L1283.03 745.87 L1283.03 752.74 L1290.59 752.74 L1290.59 763.80 L1298.16 763.80 L1298.16 767.66 L1305.73 767.66 L1305.73 773.19 L1313.30 773.19 L1313.30 782.74 L1320.87 782.74 L1320.87 788.44 L1328.44 788.44 L1328.44 791.62 L1336.01 791.62 L1336.01 795.14 L1343.58 795.14 L1343.58 798.83 L1351.15 798.83 L1351.15 801.68 L1358.72 801.68 L1358.72 803.85 L1366.29 803.85 L1366.29 804.86 L1373.86 804.86 L1373.86 805.36 L1381.43 805.36 L1381.43 805.86 L1388.99 805.86 L1388.99 806.03 L1396.56 806.03 L1396.56 806.20 Z" fill="#A60628" fill-opacity="0.8"/>
<path d="M1382.47 806.20 L1382.47 806.12 L1386.72 806.12 L1386.72 806.03 L1390.98 806.03 L1390.98 805.86 L1395.24 805.86 L1395.24 805.36 L1399.50 805.36 L1399.50 803.69 L1403.75 803.69 L1403.75 800.33 L1408.01 800.33 L1408.01 793.46 L1412.27 793.46 L1412.27 786.43 L1416.53 786.43 L1416.53 777.38 L1420.79 777.38 L1420.79 764.47 L1425.04 764.47 L1425.04 745.53 L1429.30 745.53 L1429.30 730.45 L1433.56 730.45 L1433.56 705.82 L1437.82 705.82 L1437.82 683.19 L1442.07 683.19 L1442.07 677.50 L1446.33 677.50 L1446.33 666.10 L1450.59 666.10 L1450.59 681.18 L1454.85 681.18 L1454.85 700.29 L1459.10 700.29 L1459.10 730.96 L1463.36 730.96 L1463.36 755.09 L1467.62 755.09 L1467.62 777.38 L1471.88 777.38 L1471.88 793.46 L1476.13 793.46 L1476.13 801.17 L1480.39 801.17 L1480.39 804.86 L1484.65 804.86 L1484.65 805.86 L1488.91 805.86 L1488.91 806.20 Z" fill="#7A68A6" fill-opacity="0.8"/>
<path d="M1204.12 806.20 L1204.12 802.85 L1207.66 802.85 L1207.66 784.92 L1211.19 784.92 L1211.19 746.21 L1214.73 746.21 L1214.73 699.78 L1218.27 699.78 L1218.27 649.68 L1221.81 649.68 L1221.81 623.53 L1225.35 623.53 L1225.35 616.83 L1228.89 616.83 L1228.89 633.59 L1232.43 633.59 L1232.43 660.91 L1235.96 660.91 L1235.96 692.75 L1239.50 692.75 L1239.50 718.72 L1243.04 718.72 L1243.04 749.05 L1246.58 749.05 L1246.58 766.99 L1250.12 766.99 L1250.12 782.24 L1253.66 782.24 L1253.66 789.44 L1257.20 789.44 L1257.20 795.31 L1260.73 795.31 L1260.73 800.33 L1264.27 800.33 L1264.27 802.85 L1267.81 802.85 L1267.81 804.52 L1271.35 804.52 L1271.35 805.36 L1274.89 805.36 L1274.89 805.70 L1278.43 805.70 L1278.43 805.86 L1281.97 805.86 L1281.97 806.03 L1285.50 806.03 L1285.50 806.12 L1289.04 806.12 L1289.04 806.12 L1292.58 806.12 L1292.58 806.20 Z" fill="#467821" fill-opacity="0.8"/>
<rect x="1200.9" y="605.1" width="302.20" height="201.10" fill="none" stroke="#888" stroke-width="0.8" stroke-dasharray="1.5 2"/>
<path d="M1200.9 605.1 L1200.9 806.2 L1503.1 806.2" fill="none" stroke="#666" stroke-width="0.9"/>
<line x1="1200.9" y1="806.20" x2="1204.9" y2="806.20" stroke="#333" stroke-width="0.9"/><line x1="1499.1" y1="806.20" x2="1503.1" y2="806.20" stroke="#333" stroke-width="0.9"/>
<text x="1196.9" y="809.50" text-anchor="end" font-family="Liberation Sans" font-size="9.5" fill="#222">0</text>
<line x1="1200.9" y1="772.68" x2="1204.9" y2="772.68" stroke="#333" stroke-width="0.9"/><line x1="1499.1" y1="772.68" x2="1503.1" y2="772.68" stroke="#333" stroke-width="0.9"/>
<text x="1196.9" y="775.98" text-anchor="end" font-family="Liberation Sans" font-size="9.5" fill="#222">2</text>
<line x1="1200.9" y1="739.17" x2="1204.9" y2="739.17" stroke="#333" stroke-width="0.9"/><line x1="1499.1" y1="739.17" x2="1503.1" y2="739.17" stroke="#333" stroke-width="0.9"/>
<text x="1196.9" y="742.47" text-anchor="end" font-family="Liberation Sans" font-size="9.5" fill="#222">4</text>
<line x1="1200.9" y1="705.65" x2="1204.9" y2="705.65" stroke="#333" stroke-width="0.9"/><line x1="1499.1" y1="705.65" x2="1503.1" y2="705.65" stroke="#333" stroke-width="0.9"/>
<text x="1196.9" y="708.95" text-anchor="end" font-family="Liberation Sans" font-size="9.5" fill="#222">6</text>
<line x1="1200.9" y1="672.13" x2="1204.9" y2="672.13" stroke="#333" stroke-width="0.9"/><line x1="1499.1" y1="672.13" x2="1503.1" y2="672.13" stroke="#333" stroke-width="0.9"/>
<text x="1196.9" y="675.43" text-anchor="end" font-family="Liberation Sans" font-size="9.5" fill="#222">8</text>
<line x1="1200.9" y1="638.62" x2="1204.9" y2="638.62" stroke="#333" stroke-width="0.9"/><line x1="1499.1" y1="638.62" x2="1503.1" y2="638.62" stroke="#333" stroke-width="0.9"/>
<text x="1196.9" y="641.92" text-anchor="end" font-family="Liberation Sans" font-size="9.5" fill="#222">10</text>
<line x1="1200.9" y1="605.10" x2="1204.9" y2="605.10" stroke="#333" stroke-width="0.9"/><line x1="1499.1" y1="605.10" x2="1503.1" y2="605.10" stroke="#333" stroke-width="0.9"/>
<text x="1196.9" y="608.40" text-anchor="end" font-family="Liberation Sans" font-size="9.5" fill="#222">12</text>
<line x1="1200.90" y1="806.2" x2="1200.90" y2="802.2" stroke="#333" stroke-width="0.9"/><line x1="1200.90" y1="605.1" x2="1200.90" y2="609.1" stroke="#333" stroke-width="0.9"/>
<text x="1200.90" y="817.2" text-anchor="middle" font-family="Liberation Sans" font-size="9.5" fill="#222">0.0</text>
<line x1="1261.34" y1="806.2" x2="1261.34" y2="802.2" stroke="#333" stroke-width="0.9"/><line x1="1261.34" y1="605.1" x2="1261.34" y2="609.1" stroke="#333" stroke-width="0.9"/>
<text x="1261.34" y="817.2" text-anchor="middle" font-family="Liberation Sans" font-size="9.5" fill="#222">0.2</text>
<line x1="1321.78" y1="806.2" x2="1321.78" y2="802.2" stroke="#333" stroke-width="0.9"/><line x1="1321.78" y1="605.1" x2="1321.78" y2="609.1" stroke="#333" stroke-width="0.9"/>
<text x="1321.78" y="817.2" text-anchor="middle" font-family="Liberation Sans" font-size="9.5" fill="#222">0.4</text>
<line x1="1382.22" y1="806.2" x2="1382.22" y2="802.2" stroke="#333" stroke-width="0.9"/><line x1="1382.22" y1="605.1" x2="1382.22" y2="609.1" stroke="#333" stroke-width="0.9"/>
<text x="1382.22" y="817.2" text-anchor="middle" font-family="Liberation Sans" font-size="9.5" fill="#222">0.6</text>
<line x1="1442.66" y1="806.2" x2="1442.66" y2="802.2" stroke="#333" stroke-width="0.9"/><line x1="1442.66" y1="605.1" x2="1442.66" y2="609.1" stroke="#333" stroke-width="0.9"/>
<text x="1442.66" y="817.2" text-anchor="middle" font-family="Liberation Sans" font-size="9.5" fill="#222">0.8</text>
<line x1="1503.10" y1="806.2" x2="1503.10" y2="802.2" stroke="#333" stroke-width="0.9"/><line x1="1503.10" y1="605.1" x2="1503.10" y2="609.1" stroke="#333" stroke-width="0.9"/>
<text x="1503.10" y="817.2" text-anchor="middle" font-family="Liberation Sans" font-size="9.5" fill="#222">1.0</text>
</svg>
<!-- /HIST -->
<!-- input prompt cell -->
<div class="a" style="left:1157px;top:834px;width:663px;height:40px;border:1px solid #66bb6a;background:#fff"></div>
<div class="a" style="left:1158px;top:835px;width:5px;height:38px;background:#66bb6a"></div>
<div class="a prompt" style="left:1168px;top:844px;line-height:17px">In [ ]:</div>

<!-- terminal -->
<div class="a" style="left:542px;top:923px;width:1288px;height:258px;background:#000;border:1px solid #bdbdbd;border-top:none"></div>
<div class="a" style="left:543px;top:924px;width:1286px;height:256px;background:#000"></div>
<div class="a" style="left:542px;top:902px;width:130px;height:22px;background:#fff;border-left:1px solid #bdbdbd;border-right:1px solid #bdbdbd"></div>
<div class="ln" style="left:542px;top:902px;width:130px;height:1px;background:#2196f3"></div>
<svg class="a" style="left:542px;top:900px" width="140" height="26" viewBox="542 900 140 26">
  <rect x="550.5" y="906.5" width="17" height="11.5" fill="#222" stroke="#757575" stroke-width="1"/>
  <path d="M553.5 911 L555 912 L553.5 913 M555.5 915 L558.5 915" stroke="#ddd" stroke-width="0.8" fill="none"/>
  <path d="M556 915 L559 915" stroke="#f57c00" stroke-width="0.8"/>
  <path d="M655.3 909.6 L662.5 916.8 M662.5 909.6 L655.3 916.8" stroke="#616161" stroke-width="2.9" stroke-linecap="round"/>
</svg>
<div class="a pre" style="left:571px;top:903px;line-height:20px;color:#616161">Terminal 1</div>
<!-- TERM -->
<div class="a term" style="left:551px;top:947px;letter-spacing:0.02px"><span style="color:#19a1ac">  1  </span><span style="color:#ffffff;font-weight:bold">[</span><span style="color:#4e9a06">|||||||</span><span style="color:#d42f08">||||||</span>                                              <span style="color:#5f6160">18.1%</span><span style="color:#ffffff;font-weight:bold">]</span>     <span style="color:#19a1ac">Tasks: </span><span style="color:#34d6dc;font-weight:bold">305</span><span style="color:#19a1ac"> total, </span><span style="color:#8ae234;font-weight:bold">1</span><span style="color:#19a1ac"> running</span>
<span style="color:#19a1ac">  2  </span><span style="color:#ffffff;font-weight:bold">[</span><span style="color:#4e9a06">||</span><span style="color:#d42f08">||</span>                                                        <span style="color:#5f6160">5.0%</span><span style="color:#ffffff;font-weight:bold">]</span>     <span style="color:#19a1ac">Load average: </span><span style="color:#5f6160">2.29 </span><span style="color:#ffffff;font-weight:bold">2.07 </span><span style="color:#ffffff;font-weight:bold">2.09</span>
<span style="color:#19a1ac">  3  </span><span style="color:#ffffff;font-weight:bold">[</span><span style="color:#4e9a06">||||||</span><span style="color:#d42f08">||||</span>                                                 <span style="color:#5f6160">15.6%</span><span style="color:#ffffff;font-weight:bold">]</span>     <span style="color:#19a1ac">Uptime: </span><span style="color:#34d6dc;font-weight:bold">4 days, 21:59:11</span>
<span style="color:#19a1ac">  4  </span><span style="color:#ffffff;font-weight:bold">[</span><span style="color:#4e9a06">|||</span><span style="color:#d42f08">||</span>                                                       <span style="color:#5f6160">5.0%</span><span style="color:#ffffff;font-weight:bold">]</span>
<span style="color:#19a1ac">  Mem</span><span style="color:#ffffff;font-weight:bold">[</span><span style="color:#4e9a06">|||||||||||||||||||||||||||||||||||||||||||||||</span><span style="color:#3a6cc8">||||||</span><span style="color:#3a6cc8">5987/8192MB</span><span style="color:#ffffff;font-weight:bold">]</span>
<span style="color:#19a1ac">  Swp</span><span style="color:#ffffff;font-weight:bold">[</span><span style="color:#d42f08">||||||||||||||||||||||||||||||||||||||||||||||||||||</span> <span style="color:#5f6160">2487/3072MB</span><span style="color:#ffffff;font-weight:bold">]</span>

<span style="color:#000;background:#4e9a06">  PID USER     PRI  NI  VIRT   RES   SHR S </span><span style="color:#000;background:#19959b">CPU%</span><span style="color:#000;background:#4e9a06"> MEM%   TIME+  Command                                                                                </span>
<span style="color:#2e3436;background:#19959b">82374 fperez    31   0 2389M  2048     0 R  0.0  0.0  0:00.00 htop                                                                                   </span>
<span style="color:#ffffff;font-weight:bold">    1</span> <span style="color:#5f6160">root</span><span style="color:#ffffff;font-weight:bold">       0   0     0     0     0    0.0  0.0  0:00.00 (launchd)</span>
<span style="color:#ffffff;font-weight:bold">   46</span> <span style="color:#5f6160">root</span><span style="color:#ffffff;font-weight:bold">       0   0     0     0     0    0.0  0.0  0:00.00 (syslogd)</span>
<span style="color:#ffffff;font-weight:bold">   47</span> <span style="color:#5f6160">root</span><span style="color:#ffffff;font-weight:bold">       0   0     0     0     0    0.0  0.0  0:00.00 (UserEventAgent)</span>
<span style="color:#ffffff;font-weight:bold">F1</span><span style="color:#2e3436;background:#19959b">Help  </span><span style="color:#ffffff;font-weight:bold">F2</span><span style="color:#2e3436;background:#19959b">Setup </span><span style="color:#ffffff;font-weight:bold">F3</span><span style="color:#2e3436;background:#19959b">Search</span><span style="color:#ffffff;font-weight:bold">F4</span><span style="color:#2e3436;background:#19959b">Invert</span><span style="color:#ffffff;font-weight:bold">F5</span><span style="color:#2e3436;background:#19959b">Tree  </span><span style="color:#ffffff;font-weight:bold">F6</span><span style="color:#2e3436;background:#19959b">SortBy</span><span style="color:#ffffff;font-weight:bold">F7</span><span style="color:#2e3436;background:#19959b">Nice -</span><span style="color:#ffffff;font-weight:bold">F8</span><span style="color:#2e3436;background:#19959b">Nice +</span><span style="color:#ffffff;font-weight:bold">F9</span><span style="color:#2e3436;background:#19959b">Kill  </span><span style="color:#ffffff;font-weight:bold">F10</span><span style="color:#2e3436;background:#19959b">Quit                                                                      </span></div>
<!-- /TERM -->

</div></div>
</body></html>
